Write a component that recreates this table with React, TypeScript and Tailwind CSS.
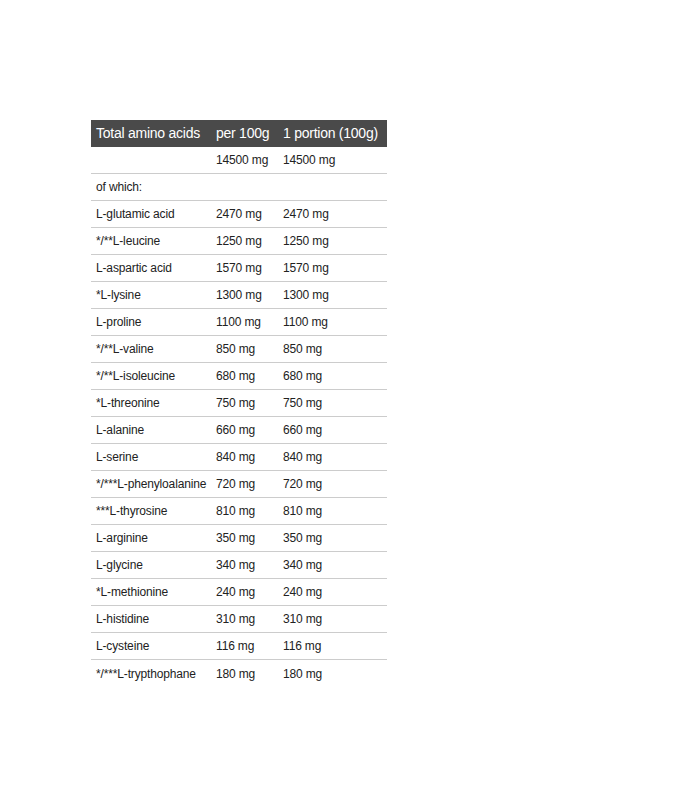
import React from "react";

const rows: [string, string, string][] = [
  ["", "14500 mg", "14500 mg"],
  ["of which:", "", ""],
  ["L-glutamic acid", "2470 mg", "2470 mg"],
  ["*/**L-leucine", "1250 mg", "1250 mg"],
  ["L-aspartic acid", "1570 mg", "1570 mg"],
  ["*L-lysine", "1300 mg", "1300 mg"],
  ["L-proline", "1100 mg", "1100 mg"],
  ["*/**L-valine", "850 mg", "850 mg"],
  ["*/**L-isoleucine", "680 mg", "680 mg"],
  ["*L-threonine", "750 mg", "750 mg"],
  ["L-alanine", "660 mg", "660 mg"],
  ["L-serine", "840 mg", "840 mg"],
  ["*/***L-phenyloalanine", "720 mg", "720 mg"],
  ["***L-thyrosine", "810 mg", "810 mg"],
  ["L-arginine", "350 mg", "350 mg"],
  ["L-glycine", "340 mg", "340 mg"],
  ["*L-methionine", "240 mg", "240 mg"],
  ["L-histidine", "310 mg", "310 mg"],
  ["L-cysteine", "116 mg", "116 mg"],
  ["*/***L-trypthophane", "180 mg", "180 mg"],
];

export default function App() {
  return (
    <div
      className="min-h-[800px] w-[700px] bg-white pt-[120px] pl-[91px]"
      style={{ fontFamily: '"Liberation Sans", Arial, sans-serif' }}
    >
      <div className="w-[296px]">
        <div className="flex h-[27px] items-center bg-[#4a4a4a] text-[14px] tracking-[-0.25px] text-white">
          <div className="w-[120px] pl-[5px]">Total amino acids</div>
          <div className="w-[67px] pl-[5px]">per 100g</div>
          <div className="flex-1 pl-[5px]">1 portion (100g)</div>
        </div>
        {rows.map((r, i) => (
          <div
            key={i}
            className={
              "flex h-[27px] items-center text-[12px] tracking-[-0.15px] text-[#222222] " +
              (i < rows.length - 1 ? "border-b border-[#cccccc]" : "")
            }
          >
            <div className="w-[120px] pl-[5px]">{r[0]}</div>
            <div className="w-[67px] pl-[5px]">{r[1]}</div>
            <div className="flex-1 pl-[5px]">{r[2]}</div>
          </div>
        ))}
      </div>
    </div>
  );
}
